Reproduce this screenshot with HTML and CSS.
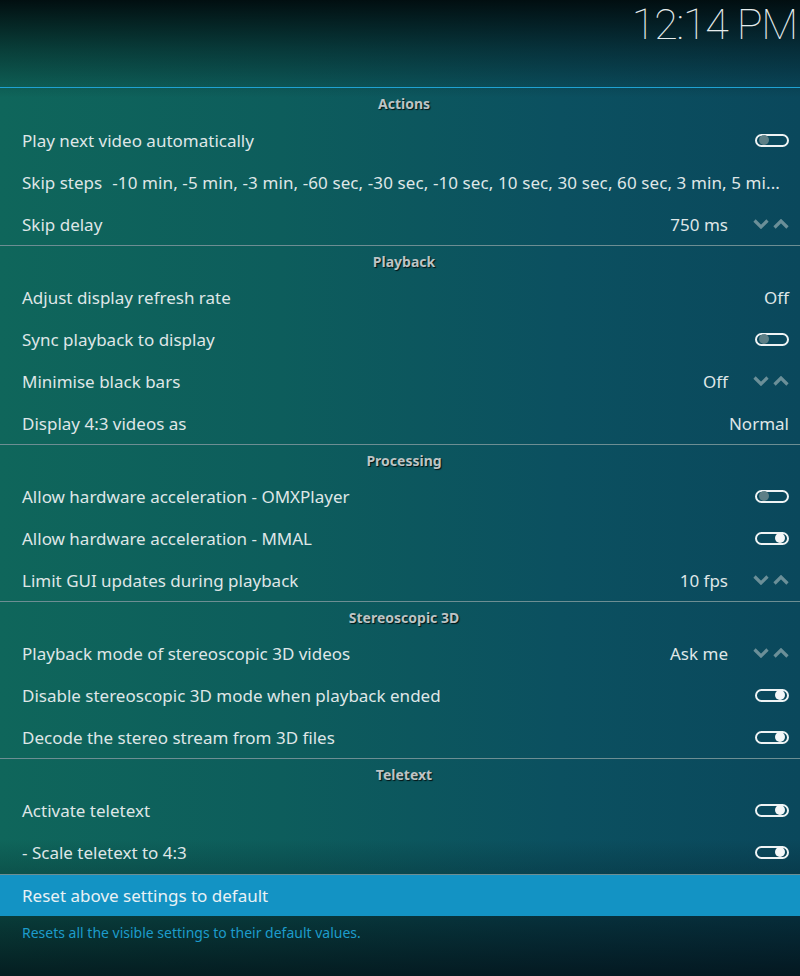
FILE: index.html
```html
<!DOCTYPE html>
<html lang="en">
<head>
<meta charset="utf-8">
<title>Settings - Video</title>
<link rel="stylesheet" href="styles.css">
</head>
<body>
<div class="screen">
  <header class="topbar">
    <div class="clock">12:14 PM</div>
  </header>

  <div class="list">
    <section class="group first">
      <div class="group-title">Actions</div>
      <div class="row"><span class="label">Play next video automatically</span><span class="toggle off"></span></div>
      <div class="row"><span class="label">Skip steps</span><span class="value long">-10 min, -5 min, -3 min, -60 sec, -30 sec, -10 sec, 10 sec, 30 sec, 60 sec, 3 min, 5 mi...</span></div>
      <div class="row"><span class="label">Skip delay</span><span class="value">750 ms</span><span class="spin"><svg viewBox="0 0 36 10" width="36" height="10"><polyline points="1.5,1.5 8,8 14.5,1.5"/><polyline points="21.5,8.5 28,2 34.5,8.5"/></svg></span></div>
    </section>

    <section class="group">
      <div class="group-title">Playback</div>
      <div class="row"><span class="label">Adjust display refresh rate</span><span class="value">Off</span></div>
      <div class="row"><span class="label">Sync playback to display</span><span class="toggle off"></span></div>
      <div class="row"><span class="label">Minimise black bars</span><span class="value">Off</span><span class="spin"><svg viewBox="0 0 36 10" width="36" height="10"><polyline points="1.5,1.5 8,8 14.5,1.5"/><polyline points="21.5,8.5 28,2 34.5,8.5"/></svg></span></div>
      <div class="row"><span class="label">Display 4:3 videos as</span><span class="value">Normal</span></div>
    </section>

    <section class="group">
      <div class="group-title">Processing</div>
      <div class="row"><span class="label">Allow hardware acceleration - OMXPlayer</span><span class="toggle off"></span></div>
      <div class="row"><span class="label">Allow hardware acceleration - MMAL</span><span class="toggle on"></span></div>
      <div class="row"><span class="label">Limit GUI updates during playback</span><span class="value">10 fps</span><span class="spin"><svg viewBox="0 0 36 10" width="36" height="10"><polyline points="1.5,1.5 8,8 14.5,1.5"/><polyline points="21.5,8.5 28,2 34.5,8.5"/></svg></span></div>
    </section>

    <section class="group">
      <div class="group-title">Stereoscopic 3D</div>
      <div class="row"><span class="label">Playback mode of stereoscopic 3D videos</span><span class="value">Ask me</span><span class="spin"><svg viewBox="0 0 36 10" width="36" height="10"><polyline points="1.5,1.5 8,8 14.5,1.5"/><polyline points="21.5,8.5 28,2 34.5,8.5"/></svg></span></div>
      <div class="row"><span class="label">Disable stereoscopic 3D mode when playback ended</span><span class="toggle on"></span></div>
      <div class="row"><span class="label">Decode the stereo stream from 3D files</span><span class="toggle on"></span></div>
    </section>

    <section class="group">
      <div class="group-title">Teletext</div>
      <div class="row"><span class="label">Activate teletext</span><span class="toggle on"></span></div>
      <div class="row"><span class="label">- Scale teletext to 4:3</span><span class="toggle on"></span></div>
    </section>

    <div class="row reset"><span class="label">Reset above settings to default</span></div>
  </div>

  <p class="desc">Resets all the visible settings to their default values.</p>
</div>
</body>
</html>
```

FILE: styles.css
```css
* { box-sizing: border-box; }

html, body {
  margin: 0;
  padding: 0;
  width: 800px;
  height: 976px;
  overflow: hidden;
}

body {
  font-family: "Noto Sans", "Open Sans", sans-serif;
  color: #dfe6e7;
}

.screen {
  width: 800px;
  height: 976px;
  display: flex;
  flex-direction: column;
  background:
    linear-gradient(to bottom, rgba(1, 12, 14, 0.97) 0%, rgba(1, 12, 14, 0.45) 5%, rgba(1, 12, 14, 0) 10%, rgba(0, 0, 0, 0) 86%, rgba(2, 14, 20, 0.55) 95%, rgba(2, 12, 18, 0.8) 100%),
    linear-gradient(to right, #0f665b 0%, #0d5d5c 35%, #0b5060 70%, #0a485c 100%);
}

.topbar {
  height: 87px;
  display: flex;
  justify-content: flex-end;
  align-items: flex-start;
  padding-top: 1px;
}

.clock {
  font-family: "Roboto", "Noto Sans", sans-serif;
  font-weight: 100;
  font-size: 43px;
  line-height: 46px;
  color: #e6eded;
  padding-right: 3px;
  letter-spacing: -1.2px;
}

.group {
  border-top: 1px solid #6d8e93;
}

.group.first {
  border-top: 1px solid #1fa2d3;
}

.group-title {
  height: 30px;
  display: flex;
  align-items: center;
  justify-content: center;
  padding-left: 8px;
  font-size: 14px;
  font-weight: 700;
  color: #bcc4c5;
  text-shadow: 1px 1px 1px rgba(0, 0, 0, 0.8);
}

.group.first .group-title {
  height: 31px;
}

.row {
  height: 42px;
  display: flex;
  align-items: center;
  padding: 0 11px 0 22px;
  font-size: 17px;
  white-space: nowrap;
}

.label {
  flex: 0 0 auto;
}

.value {
  margin-left: auto;
}

.value.long {
  flex: 1 1 auto;
  min-width: 0;
  margin-left: 9px;
  overflow: hidden;
  text-align: right;
  padding-right: 9px;
  letter-spacing: 0.1px;
}

.spin {
  margin-left: 25px;
  width: 36px;
  height: 10px;
  display: flex;
}

.spin polyline {
  fill: none;
  stroke: #6b8f98;
  stroke-width: 3.2;
}

.toggle {
  margin-left: auto;
  position: relative;
  width: 34px;
  height: 13px;
  border: 2px solid #eef3f4;
  border-radius: 7px;
}

.toggle::after {
  content: "";
  position: absolute;
  top: 50%;
  width: 10px;
  height: 10px;
  margin-top: -5px;
  border-radius: 50%;
}

.toggle.off::after {
  left: 2px;
  background: #5d7f86;
}

.toggle.on::after {
  right: 2px;
  background: #f4f7f8;
}

.reset {
  margin-top: 1px;
  border-top: 1px solid #6d8e93;
  background: #1393c4;
  color: #e8f1f5;
}

.desc {
  margin: 7px 0 0;
  padding-left: 22px;
  font-size: 14px;
  line-height: 20px;
  color: #1d9ccb;
}
```
